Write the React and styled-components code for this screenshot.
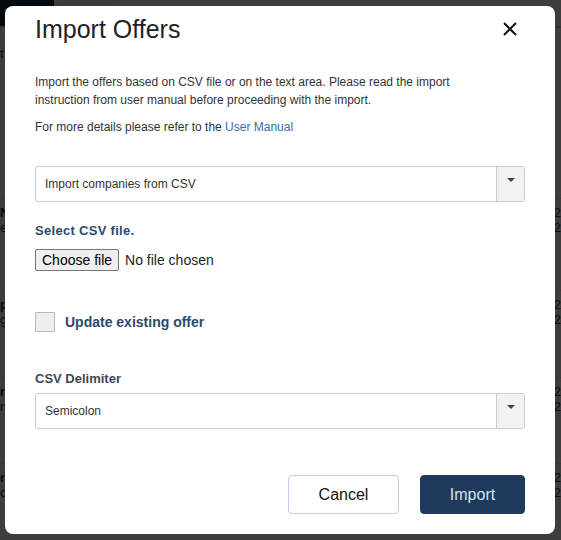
import React from 'react';
import styled, { createGlobalStyle } from 'styled-components';

const GlobalStyle = createGlobalStyle`
  html, body {
    margin: 0;
    padding: 0;
    background: #ffffff;
  }
  body {
    font-family: "Liberation Sans", Arial, sans-serif;
  }
  * {
    box-sizing: border-box;
  }
`;

const Screen = styled.div`
  position: relative;
  width: 561px;
  height: 540px;
  overflow: hidden;
  background: #ffffff;
`;

// the page that sits under the dimmed backdrop (only its edges show)
const PageHeader = styled.div`
  display: flex;
  gap: 9px;
  height: 28px;
  border-bottom: 2px solid #d8d8d8;
`;

const PageTab = styled.div`
  width: 54px;
  background: ${p => (p.active ? '#0b2a45' : '#f4f4f4')};
  color: ${p => (p.active ? '#ffffff' : '#333')};
  font-size: 14px;
  padding: 6px 4px;
`;

const PageList = styled.div`
  display: flex;
  flex-direction: column;
  padding-top: 12px;
`;

const PageRow = styled.div`
  display: flex;
  justify-content: space-between;
  height: ${p => p.h}px;
  padding-top: 6px;
  border-bottom: 1px solid #e6e6e6;
  font-size: 13px;
  line-height: 15px;
  color: #333;

  b {
    color: #0b2a45;
  }
`;

const Backdrop = styled.div`
  position: absolute;
  inset: 0;
  background: rgba(0, 0, 0, 0.76);
  padding: 6px 6px 6px 5px;
`;

const Modal = styled.div`
  width: 550px;
  height: 528px;
  background: #ffffff;
  border-radius: 8px;
  display: flex;
  flex-direction: column;
`;

const Header = styled.div`
  display: flex;
  align-items: center;
  justify-content: space-between;
  padding: 8px 38px 0 30px;
`;

const Title = styled.h2`
  margin: 0;
  font-size: 25px;
  line-height: 30px;
  font-weight: 400;
  color: #222;
`;

const CloseButton = styled.button`
  width: 14px;
  height: 14px;
  padding: 0;
  border: 0;
  background: none;
  display: flex;
  cursor: pointer;
`;

const Body = styled.div`
  padding: 29px 30px 0 30px;
  display: flex;
  flex-direction: column;
  flex: 1;
`;

const Text = styled.p`
  margin: 0 0 ${p => p.mb || 0}px 0;
  max-width: 450px;
  font-size: 12px;
  line-height: 18px;
  color: #333;

  a {
    color: #3a6ea5;
    text-decoration: none;
  }
`;

const Select = styled.div`
  display: flex;
  height: 36px;
  margin-top: ${p => p.mt || 0}px;
  border: 1px solid #cccccc;
  border-radius: 3px;
  background: #ffffff;
`;

const SelectValue = styled.div`
  flex: 1;
  display: flex;
  align-items: center;
  padding-left: 9px;
  font-size: 12px;
  color: #333;
`;

const SelectArrow = styled.div`
  width: 28px;
  background: #f2f2f2;
  border-left: 1px solid #cccccc;
  border-radius: 0 2px 2px 0;
  display: flex;
  justify-content: center;
  padding-top: 11px;

  &::after {
    content: '';
    width: 0;
    height: 0;
    border-left: 4px solid transparent;
    border-right: 4px solid transparent;
    border-top: 4px solid #444;
  }
`;

const FieldLabel = styled.div`
  margin-top: ${p => p.mt || 0}px;
  font-size: ${p => p.size || 13}px;
  line-height: 18px;
  font-weight: 700;
  letter-spacing: ${p => p.spacing || 0}px;
  color: ${p => p.color || '#2b4a6f'};
`;

const FileRow = styled.div`
  display: flex;
  align-items: center;
  gap: 6px;
  margin-top: 9px;
  height: 22px;
`;

const FileButton = styled.button`
  height: 22px;
  padding: 0 6px;
  border: 1px solid #767676;
  border-radius: 2px;
  background: #efefef;
  font-family: "Liberation Sans", Arial, sans-serif;
  font-size: 14px;
  color: #000;
`;

const FileName = styled.span`
  font-size: 14px;
  color: #222;
`;

const CheckRow = styled.label`
  display: flex;
  align-items: center;
  gap: 10px;
  margin-top: 41px;
`;

const CheckBox = styled.span`
  width: 20px;
  height: 20px;
  border: 1px solid #b4b8bc;
  border-radius: 1px;
  background: #eceff0;
`;

const Footer = styled.div`
  display: flex;
  justify-content: flex-end;
  gap: 21px;
  margin-top: auto;
  padding-bottom: 20px;
`;

const Button = styled.button`
  height: 39px;
  width: ${p => p.w}px;
  border-radius: 4px;
  font-family: "Liberation Sans", Arial, sans-serif;
  font-size: 16px;
  border: 1px solid ${p => (p.primary ? '#1f3a5c' : '#bcd0e8')};
  background: ${p => (p.primary ? '#1f3a5c' : '#ffffff')};
  color: ${p => (p.primary ? '#d6e3f1' : '#111')};
`;

const rows = [
  { h: 92, t: 'N', s: 'e' },
  { h: 87, t: 'p', s: 'g' },
  { h: 86, t: 'r', s: 'm' },
  { h: 86, t: 'r', s: 'c' },
];

export default function App() {
  return (
    <Screen>
      <GlobalStyle />
      <PageHeader>
        <PageTab active>T</PageTab>
        <PageTab />
      </PageHeader>
      <PageList>
        <PageRow h={159}>
          <span>t</span>
          <span />
        </PageRow>
        {rows.map((r, i) => (
          <PageRow key={i} h={r.h}>
            <span>
              <b>{r.t}</b>
              <br />
              {r.s}
            </span>
            <span>
              2
              <br />
              2
            </span>
          </PageRow>
        ))}
      </PageList>

      <Backdrop>
        <Modal>
          <Header>
            <Title>Import Offers</Title>
            <CloseButton aria-label="Close">
              <svg width="14" height="14" viewBox="0 0 14 14">
                <path d="M1 1 L13 13 M13 1 L1 13" stroke="#111" strokeWidth="2" />
              </svg>
            </CloseButton>
          </Header>
          <Body>
            <Text mb={9}>
              Import the offers based on CSV file or on the text area. Please read the import
              instruction from user manual before proceeding with the import.
            </Text>
            <Text>
              For more details please refer to the <a href="#manual">User Manual</a>
            </Text>

            <Select mt={30}>
              <SelectValue>Import companies from CSV</SelectValue>
              <SelectArrow />
            </Select>

            <FieldLabel mt={20} spacing={0.3}>Select CSV file.</FieldLabel>
            <FileRow>
              <FileButton>Choose file</FileButton>
              <FileName>No file chosen</FileName>
            </FileRow>

            <CheckRow>
              <CheckBox />
              <FieldLabel size={14}>Update existing offer</FieldLabel>
            </CheckRow>

            <FieldLabel mt={38} color="#3f4750">CSV Delimiter</FieldLabel>
            <Select mt={5}>
              <SelectValue>Semicolon</SelectValue>
              <SelectArrow />
            </Select>

            <Footer>
              <Button w={111}>Cancel</Button>
              <Button primary w={105}>Import</Button>
            </Footer>
          </Body>
        </Modal>
      </Backdrop>
    </Screen>
  );
}
